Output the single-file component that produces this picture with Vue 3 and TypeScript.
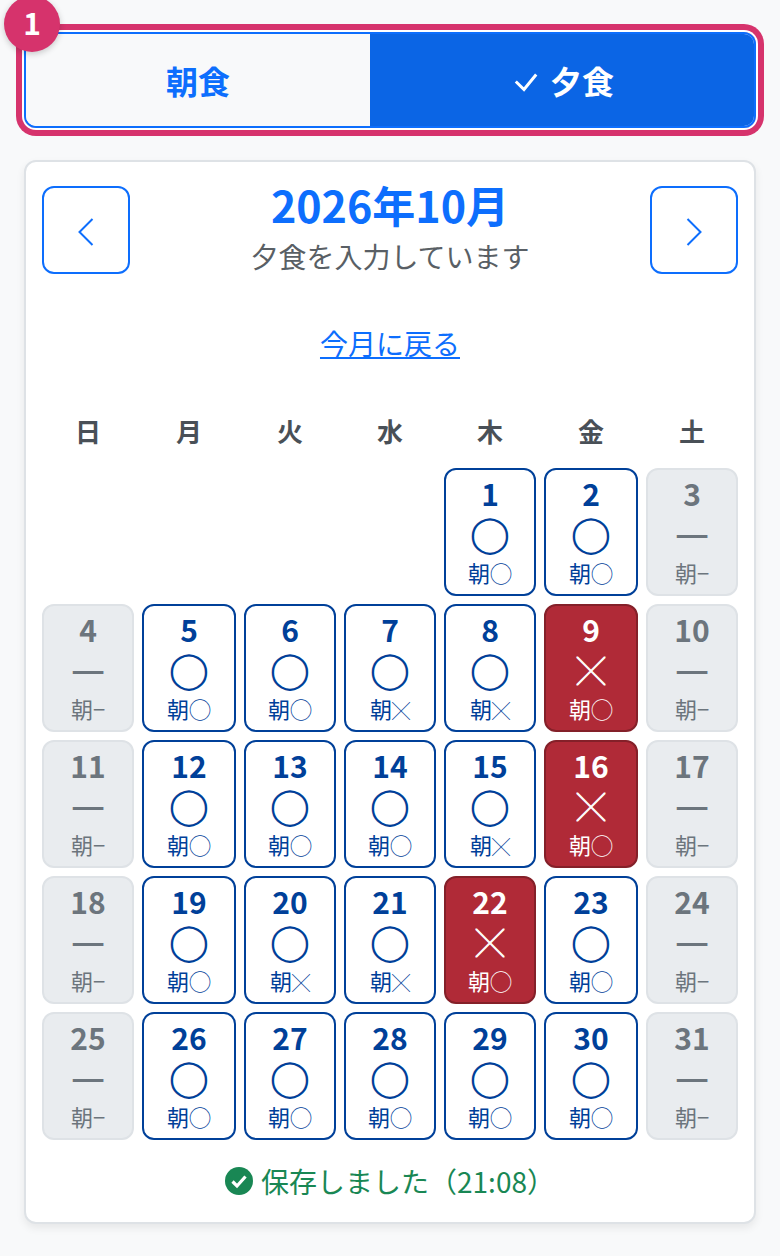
<script setup lang="ts">
type Kind = 'open' | 'off' | 'closed'
type Cell = { d: number; mark: string; am: string; kind: Kind }
const offDays = [3, 4, 10, 11, 17, 18, 24, 25, 31]
const redDays = [9, 16, 22]
const amX = [7, 8, 15, 20, 21]
const cells: (Cell | null)[] = [null, null, null, null]
for (let d = 1; d <= 31; d++) {
  if (offDays.includes(d)) cells.push({ d, mark: '—', am: '−', kind: 'off' })
  else if (redDays.includes(d)) cells.push({ d, mark: '╳', am: '◯', kind: 'closed' })
  else cells.push({ d, mark: '◯', am: amX.includes(d) ? '╳' : '◯', kind: 'open' })
}
const week = ['日', '月', '火', '水', '木', '金', '土']
</script>

<template>
  <div class="page">
    <div class="top-edge"></div>
    <div class="toggle-wrap">
      <span class="badge">1</span>
      <div class="toggle">
        <button class="seg seg-off">朝食</button>
        <button class="seg seg-on">
          <svg class="check" viewBox="0 0 28 28" aria-hidden="true"><path d="M5.8 15.5 L14 23.5 L26.2 8.5" /></svg>
          <span>夕食</span>
        </button>
      </div>
    </div>

    <section class="card">
      <div class="head">
        <button class="nav" aria-label="前の月">
          <svg viewBox="0 0 16 28"><path d="M14.5 1 L1.5 14 L14.5 27" /></svg>
        </button>
        <div class="title">
          <h1>2026年10月</h1>
          <p>夕食を入力しています</p>
        </div>
        <button class="nav" aria-label="次の月">
          <svg viewBox="0 0 16 28"><path d="M1.5 1 L14.5 14 L1.5 27" /></svg>
        </button>
      </div>
      <div class="back"><a href="#">今月に戻る</a></div>
      <div class="grid week">
        <div v-for="w in week" :key="w" class="wd">{{ w }}</div>
      </div>
      <div class="grid days">
        <template v-for="(c, i) in cells" :key="i">
          <div v-if="!c"></div>
          <div v-else class="day" :class="c.kind">
            <span class="num">{{ c.d }}</span>
            <span class="mark" :class="{ 'mark-o': c.mark === '◯', 'mark-x': c.mark === '╳', 'mark-dash': c.mark === '—' }">{{ c.mark }}</span>
            <span class="am">朝<span :class="{ 'am-x': c.am === '╳' }">{{ c.am }}</span></span>
          </div>
        </template>
      </div>
      <div class="saved">
        <svg viewBox="0 0 28 28" class="ok"><circle cx="14" cy="14" r="14" /><path d="M7.5 14.5 L12 19 L20.5 9.5" /></svg>
        <span>保存しました（21:08）</span>
      </div>
    </section>
  </div>
</template>

<style scoped>
.page {
  width: 780px;
  height: 1256px;
  box-sizing: border-box;
  background: #f8f9fa;
  padding: 0 24px;
  overflow: hidden;
  position: relative;
  font-family: "Noto Sans CJK JP", "Noto Sans", sans-serif;
}
.top-edge {
  height: 0;
  box-shadow: 0 4px 12px rgba(0, 0, 0, 0.1);
  margin: 0 2px;
}
.toggle-wrap {
  position: relative;
  margin-top: 32px;
  border-radius: 12px;
  box-shadow: 0 0 0 2px #fff, 0 0 0 8px #d6336c;
}
.badge {
  position: absolute;
  left: -20px;
  top: -36px;
  width: 56px;
  height: 56px;
  box-sizing: border-box;
  padding-bottom: 4px;
  border-radius: 50%;
  background: #d6336c;
  color: #fff;
  font-size: 30px;
  font-weight: 700;
  display: flex;
  align-items: center;
  justify-content: center;
  box-shadow: 0 2px 6px rgba(0, 0, 0, 0.2);
  z-index: 2;
}
.toggle {
  display: flex;
  height: 96px;
  border: 2px solid #0d6efd;
  border-radius: 12px;
  overflow: hidden;
  box-sizing: border-box;
}
.seg {
  flex: 1 1 auto;
  border: 0;
  margin: 0;
  padding: 0;
  font: inherit;
  font-size: 32px;
  font-weight: 700;
  display: flex;
  align-items: center;
  justify-content: center;
  gap: 12px;
}
.seg-off {
  background: #f8f9fa;
  color: #0d6efd;
}
.seg-on {
  background: #0b65e5;
  color: #fff;
}
.check {
  width: 28px;
  height: 28px;
  fill: none;
  stroke: #fff;
  stroke-width: 3;
}
.card {
  margin-top: 32px;
  background: #fff;
  border: 2px solid #dee2e6;
  border-radius: 12px;
  padding: 24px 16px 0;
  height: 1064px;
  box-sizing: border-box;
  box-shadow: 0 4px 8px rgba(0, 0, 0, 0.075);
}
.head {
  display: flex;
  justify-content: space-between;
  align-items: flex-start;
}
.nav {
  width: 88px;
  height: 88px;
  box-sizing: border-box;
  background: #fff;
  border: 2px solid #0d6efd;
  border-radius: 12px;
  display: flex;
  align-items: center;
  justify-content: center;
  padding: 4px 0 0;
}
.nav svg {
  width: 16px;
  height: 28px;
  fill: none;
  stroke: #0d6efd;
  stroke-width: 2;
}
.title {
  text-align: center;
  margin-top: -4px;
}
.title h1 {
  margin: 0;
  color: #0d6efd;
  font-size: 43px;
  line-height: 44px;
  font-weight: 700;
}
.title p {
  margin: 8px 0 0;
  color: #595f65;
  font-size: 28px;
  line-height: 44px;
}
.back {
  text-align: center;
  margin-top: 43px;
  font-size: 28px;
  line-height: 44px;
}
.back a {
  color: #0d6efd;
  text-decoration: underline;
}
.grid {
  display: grid;
  grid-template-columns: 92px 94px 92px 92px 92px 94px 92px;
  column-gap: 8px;
}
.week {
  margin-top: 46px;
}
.wd {
  text-align: center;
  font-size: 26px;
  line-height: 40px;
  font-weight: 700;
  color: #495057;
  height: 40px;
}
.days {
  margin-top: 17px;
  row-gap: 8px;
  grid-auto-rows: 128px;
}
.day {
  box-sizing: border-box;
  border: 2px solid #dee2e6;
  border-radius: 12px;
  display: flex;
  flex-direction: column;
  align-items: center;
  padding-top: 5px;
}
.open {
  background: #fff;
  border-color: #004099;
  color: #004099;
}
.off {
  background: #e9ecef;
  color: #6c757d;
}
.closed {
  background: #b02a37;
  border-color: #842029;
  color: #fff;
}
.num {
  font-size: 30px;
  line-height: 36px;
  font-weight: 700;
}
.mark {
  height: 45px;
  line-height: 45px;
  font-size: 38px;
  font-weight: 700;
}
.mark-o {
  font-family: "DejaVu Sans", sans-serif;
  font-size: 36px;
}
.mark-x {
  font-size: 28px;
  line-height: 47px;
  -webkit-text-stroke: 0.9px currentColor;
}
.mark-dash {
  line-height: 39px;
  font-weight: 500;
}
.am {
  font-size: 22px;
  line-height: 32px;
}
.am-x {
  font-size: 18px;
  line-height: 1;
}
.saved {
  margin-top: 19px;
  display: flex;
  align-items: center;
  justify-content: center;
  gap: 8px;
  color: #198754;
  font-size: 28px;
  line-height: 44px;
}
.ok {
  width: 28px;
  height: 28px;
}
.ok circle {
  fill: #198754;
}
.ok path {
  fill: none;
  stroke: #fff;
  stroke-width: 3.2;
}
</style>

<style>
html, body { margin: 0; padding: 0; background: #f8f9fa; }
</style>
